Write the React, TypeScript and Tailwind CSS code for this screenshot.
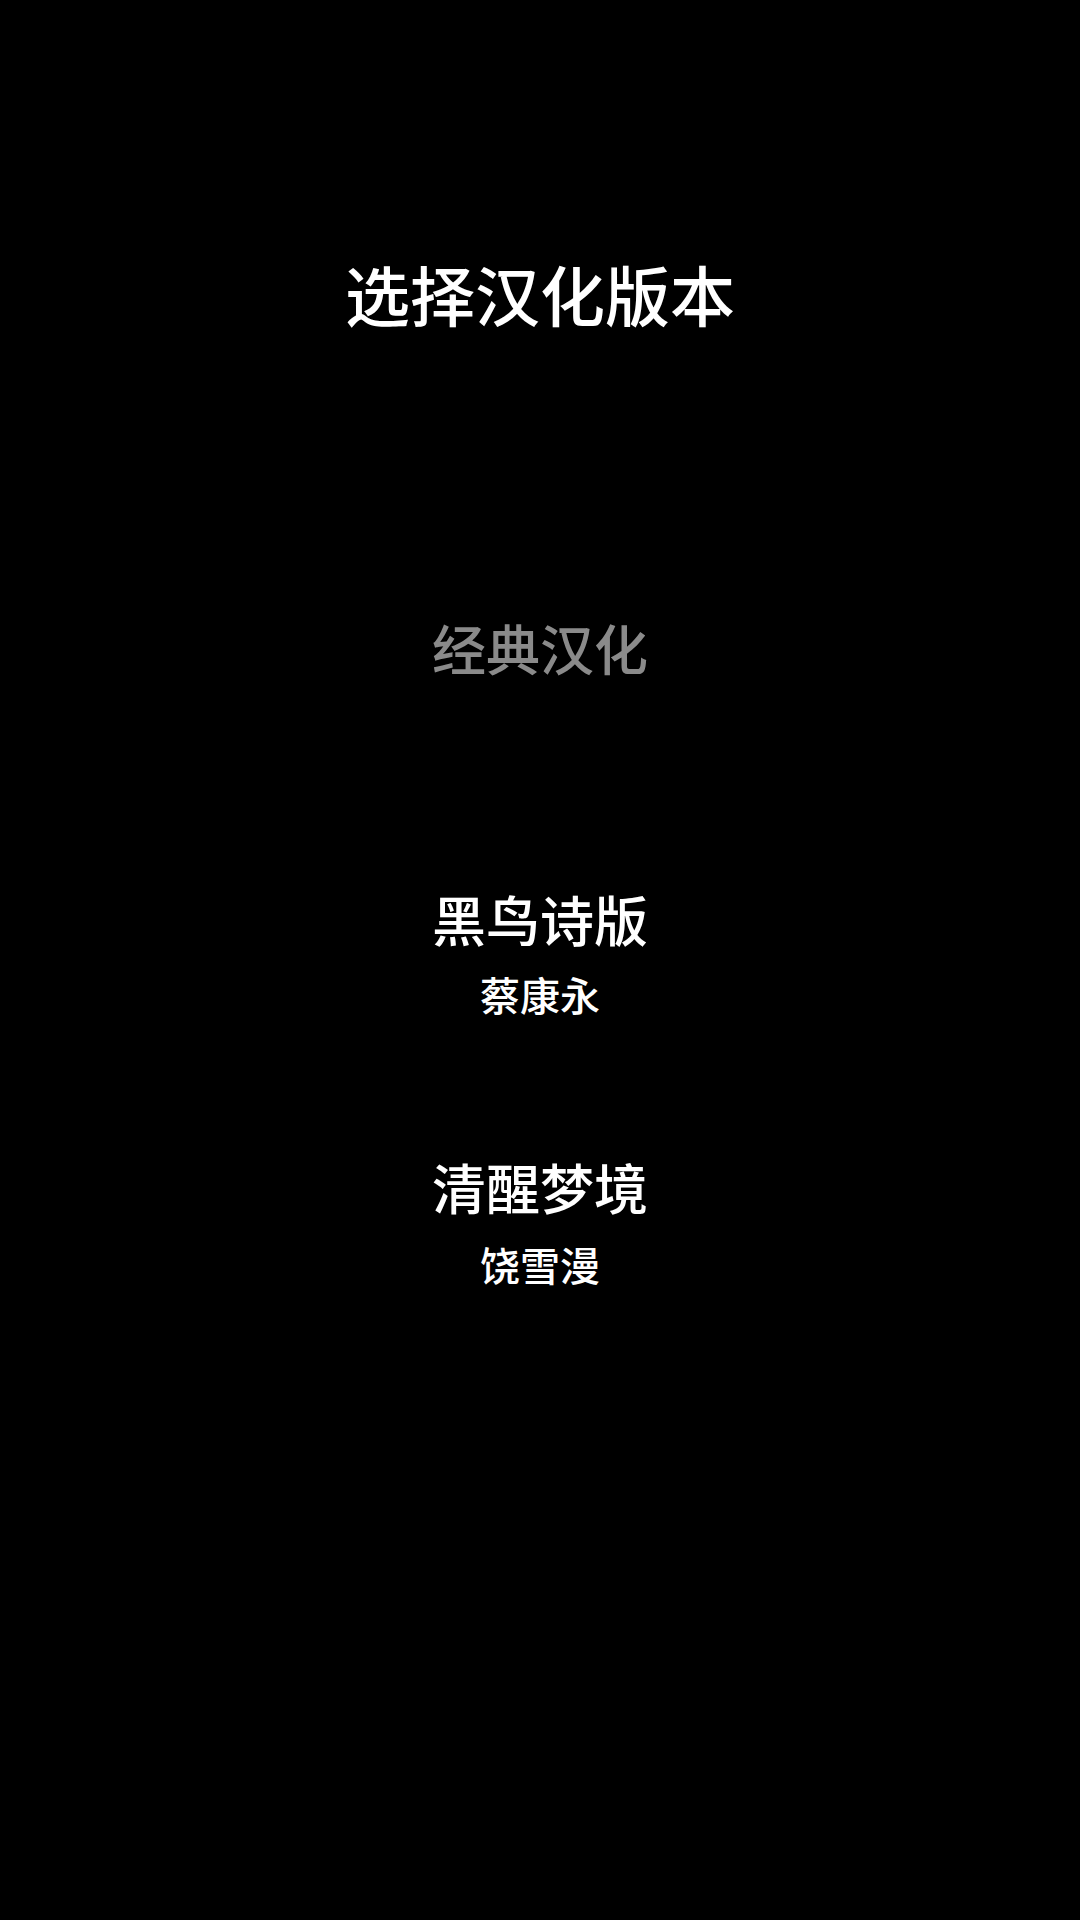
import React from 'react';

const versions = [
  { title: '经典汉化', author: '', active: false },
  { title: '黑鸟诗版', author: '蔡康永', active: true },
  { title: '清醒梦境', author: '饶雪漫', active: true },
];

export default function App() {
  return (
    <div
      className="flex min-h-[1920px] w-full flex-col items-center bg-black text-white"
      style={{ fontFamily: '"Noto Sans CJK SC", "Noto Sans", sans-serif' }}
    >
      <h1 className="pt-[255px] text-[65px] leading-[76px] font-medium">选择汉化版本</h1>

      <div className="mt-[285px] flex flex-col items-center font-medium">
        <button className="text-[54px] leading-[64px] text-[#8a8a8a]">{versions[0].title}</button>

        <button className="mt-[207px] flex flex-col items-center">
          <span className="text-[54px] leading-[64px]">{versions[1].title}</span>
          <span className="mt-[19px] text-[40px] leading-[48px]">{versions[1].author}</span>
        </button>

        <button className="mt-[137px] flex flex-col items-center">
          <span className="text-[54px] leading-[64px]">{versions[2].title}</span>
          <span className="mt-[21px] text-[40px] leading-[48px]">{versions[2].author}</span>
        </button>
      </div>
    </div>
  );
}
